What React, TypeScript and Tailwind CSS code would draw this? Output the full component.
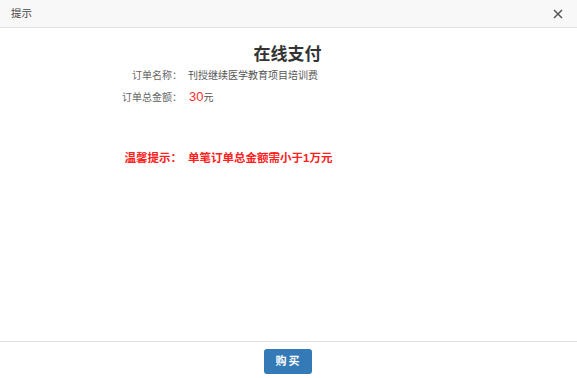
export default function App() {
  const font = { fontFamily: '"Liberation Sans", "Noto Sans CJK SC", sans-serif' }
  return (
    <div className="w-[577px] h-[378px] bg-white flex flex-col text-[10px] text-[#333]" style={font}>
      {/* header */}
      <div className="h-[28px] shrink-0 bg-[#f8f8f8] border-b border-[#e0e0e0] flex items-center justify-between pl-[11px] pr-[14px]">
        <span className="text-[10.5px] text-[#444]">提示</span>
        <svg width="10" height="10" viewBox="0 0 10 10" className="text-[#555]">
          <path d="M1 1 L9 9 M9 1 L1 9" stroke="currentColor" strokeWidth="1.5" />
        </svg>
      </div>

      {/* body */}
      <div className="flex-1 flex flex-col pt-[15px]">
        <h1 className="text-center text-[17px] font-bold text-[#333] leading-[24px] pr-[2px]">在线支付</h1>
        <div className="flex items-center h-[22px] -mt-[3px]">
          <span className="w-[182px] text-right text-[#666]">订单名称：</span>
          <span className="pl-[6px] text-[#555]">刊授继续医学教育项目培训费</span>
        </div>
        <div className="flex items-center h-[22px]">
          <span className="w-[182px] text-right text-[#666]">订单总金额：</span>
          <span className="pl-[7px] text-[#555] flex items-baseline">
            <span className="text-[13px] text-[#ff3030]">30</span>元
          </span>
        </div>
        <div className="flex items-center h-[22px] mt-[40px] font-bold text-[#ff2020] text-[11.5px]">
          <span className="w-[182px] text-right">温馨提示：</span>
          <span className="pl-[6px]">单笔订单总金额需小于1万元</span>
        </div>
      </div>

      {/* footer */}
      <div className="h-[37px] shrink-0 border-t border-[#e0e0e0] flex justify-center pt-[7px] pr-[2px]">
        <button className="w-[48px] h-[25px] rounded-[3px] bg-[#337ab7] text-white text-[11px] font-bold tracking-[2px] pl-[2px]">
          购买
        </button>
      </div>
    </div>
  )
}
